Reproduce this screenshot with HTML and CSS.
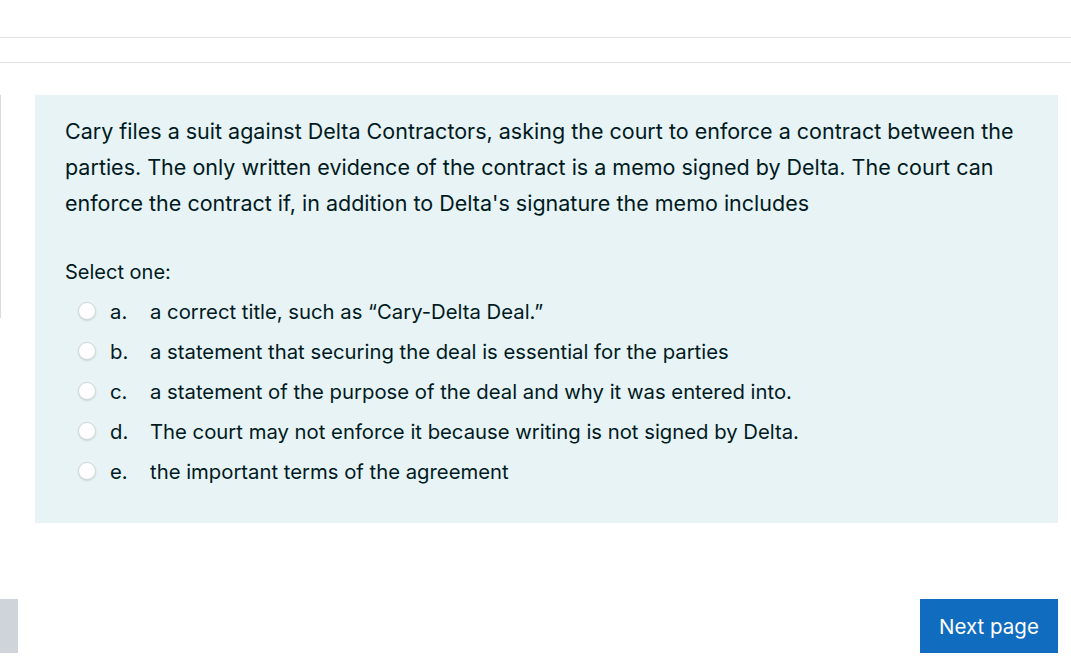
FILE: index.html
```html
<!DOCTYPE html>
<html>
<head>
<meta charset="utf-8">
<link rel="stylesheet" href="styles.css">
</head>
<body>
<div class="topbar"></div>
<div class="subbar"></div>
<div class="main">
  <div class="side"></div>
  <div class="question">
    <p class="qtext">Cary files a suit against Delta Contractors, asking the court to enforce a contract between the parties. The only written evidence of the contract is a memo signed by Delta. The court can enforce the contract if, in addition to Delta's signature the memo includes</p>
    <div class="prompt">Select one:</div>
    <div class="answers">
      <label class="opt"><span class="radio"></span><span class="letter">a.</span><span class="atext">a correct title, such as “Cary-Delta Deal.”</span></label>
      <label class="opt"><span class="radio"></span><span class="letter">b.</span><span class="atext">a statement that securing the deal is essential for the parties</span></label>
      <label class="opt"><span class="radio"></span><span class="letter">c.</span><span class="atext">a statement of the purpose of the deal and why it was entered into.</span></label>
      <label class="opt"><span class="radio"></span><span class="letter">d.</span><span class="atext">The court may not enforce it because writing is not signed by Delta.</span></label>
      <label class="opt"><span class="radio"></span><span class="letter">e.</span><span class="atext">the important terms of the agreement</span></label>
    </div>
  </div>
</div>
<div class="footer">
  <div class="prev"></div>
  <button class="next">Next page</button>
</div>
</body>
</html>
```
FILE: styles.css
```css
html, body {
  margin: 0;
  padding: 0;
  background: #ffffff;
  font-family: "Inter", "Liberation Sans", sans-serif;
  color: #001a1e;
}
.topbar {
  height: 37px;
  border-bottom: 1px solid #dee2e6;
}
.subbar {
  height: 24px;
  border-bottom: 1px solid #dee2e6;
}
.main {
  display: flex;
  align-items: flex-start;
  margin-top: 32px;
}
.side {
  width: 0;
  height: 223px;
  border-right: 1px solid #d5dbe1;
}
.question {
  margin-left: 34px;
  width: 1023px;
  box-sizing: border-box;
  background: #e7f3f5;
  padding: 18px 30px 32px 30px;
  height: 428px;
}
.qtext {
  margin: 0;
  font-size: 21.5px;
  line-height: 36px;
}
.prompt {
  margin-top: 36px;
  font-size: 20px;
  line-height: 30px;
}
.answers {
  display: flex;
  flex-direction: column;
  gap: 10px;
  margin-top: 9px;
}
.opt {
  display: flex;
  align-items: center;
  height: 30px;
  font-size: 20.3px;
}
.radio {
  width: 18px;
  height: 18px;
  box-sizing: border-box;
  border-radius: 50%;
  background: #fff;
  border: 1px solid #d3d7db;
  box-shadow: 0 1px 2px rgba(0,0,0,0.12);
  margin-left: 13px;
}
.letter {
  width: 40px;
  margin-left: 14px;
}
.footer {
  display: flex;
  justify-content: space-between;
  margin-top: 76px;
  padding-right: 13px;
}
.prev {
  width: 18px;
  height: 54px;
  background: #ced4da;
}
.next {
  width: 138px;
  height: 54px;
  border: none;
  background: #0f6cbf;
  color: #fff;
  font-family: "Inter", "Liberation Sans", sans-serif;
  font-size: 20.5px;
  padding: 0;
}
```
